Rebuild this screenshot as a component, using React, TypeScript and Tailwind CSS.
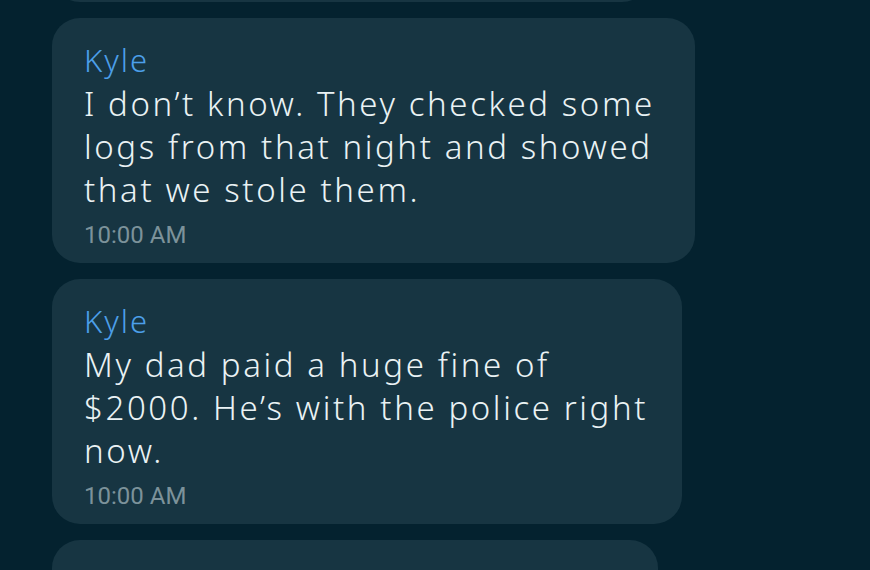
import React from "react";

type Msg = { name: string; lines: string[]; time: string; w: string };

const msgs: Msg[] = [
  {
    name: "Kyle",
    lines: ["I don’t know. They checked some", "logs from that night and showed", "that we stole them."],
    time: "10:00 AM",
    w: "w-[643px]",
  },
  {
    name: "Kyle",
    lines: ["My dad paid a huge fine of", "$2000. He’s with the police right", "now."],
    time: "10:00 AM",
    w: "w-[630px]",
  },
];

const face = { fontFamily: '"Noto Sans", "Open Sans", sans-serif' };

function Bubble({ m }: { m: Msg }) {
  return (
    <div className={`${m.w} rounded-[28px] bg-[#173542] pl-8 pr-6 pt-5 pb-3`}>
      <div className="text-[31px] font-light leading-[44px] text-[#4c9fe9] tracking-[2px]" style={face}>
        {m.name}
      </div>
      <div className="text-[33px] font-light leading-[43px] text-[#eaf2f4] tracking-[2.6px]" style={face}>
        {m.lines.map((l, i) => (
          <div key={i} className="whitespace-nowrap">
            {l}
          </div>
        ))}
      </div>
      <div
        className="mt-2 text-[24px] leading-[32px] text-[#7c929a]"
        style={{ fontFamily: '"Roboto", "Liberation Sans", sans-serif' }}
      >
        {m.time}
      </div>
    </div>
  );
}

export default function App() {
  return (
    <div className="w-[870px] h-[570px] overflow-hidden bg-[#04222f]">
      <div className="flex flex-col items-start gap-4 pl-[52px] -mt-[100px]">
        <div className="w-[598px] h-[102px] rounded-[28px] bg-[#173542]" />
        {msgs.map((m, i) => (
          <Bubble key={i} m={m} />
        ))}
        <div className="w-[606px] h-[200px] rounded-[28px] bg-[#173542] pl-8 pt-5">
          <div className="text-[31px] font-light leading-[44px] text-[#4c9fe9] tracking-[2px]" style={face}>
            Kyle
          </div>
        </div>
      </div>
    </div>
  );
}
